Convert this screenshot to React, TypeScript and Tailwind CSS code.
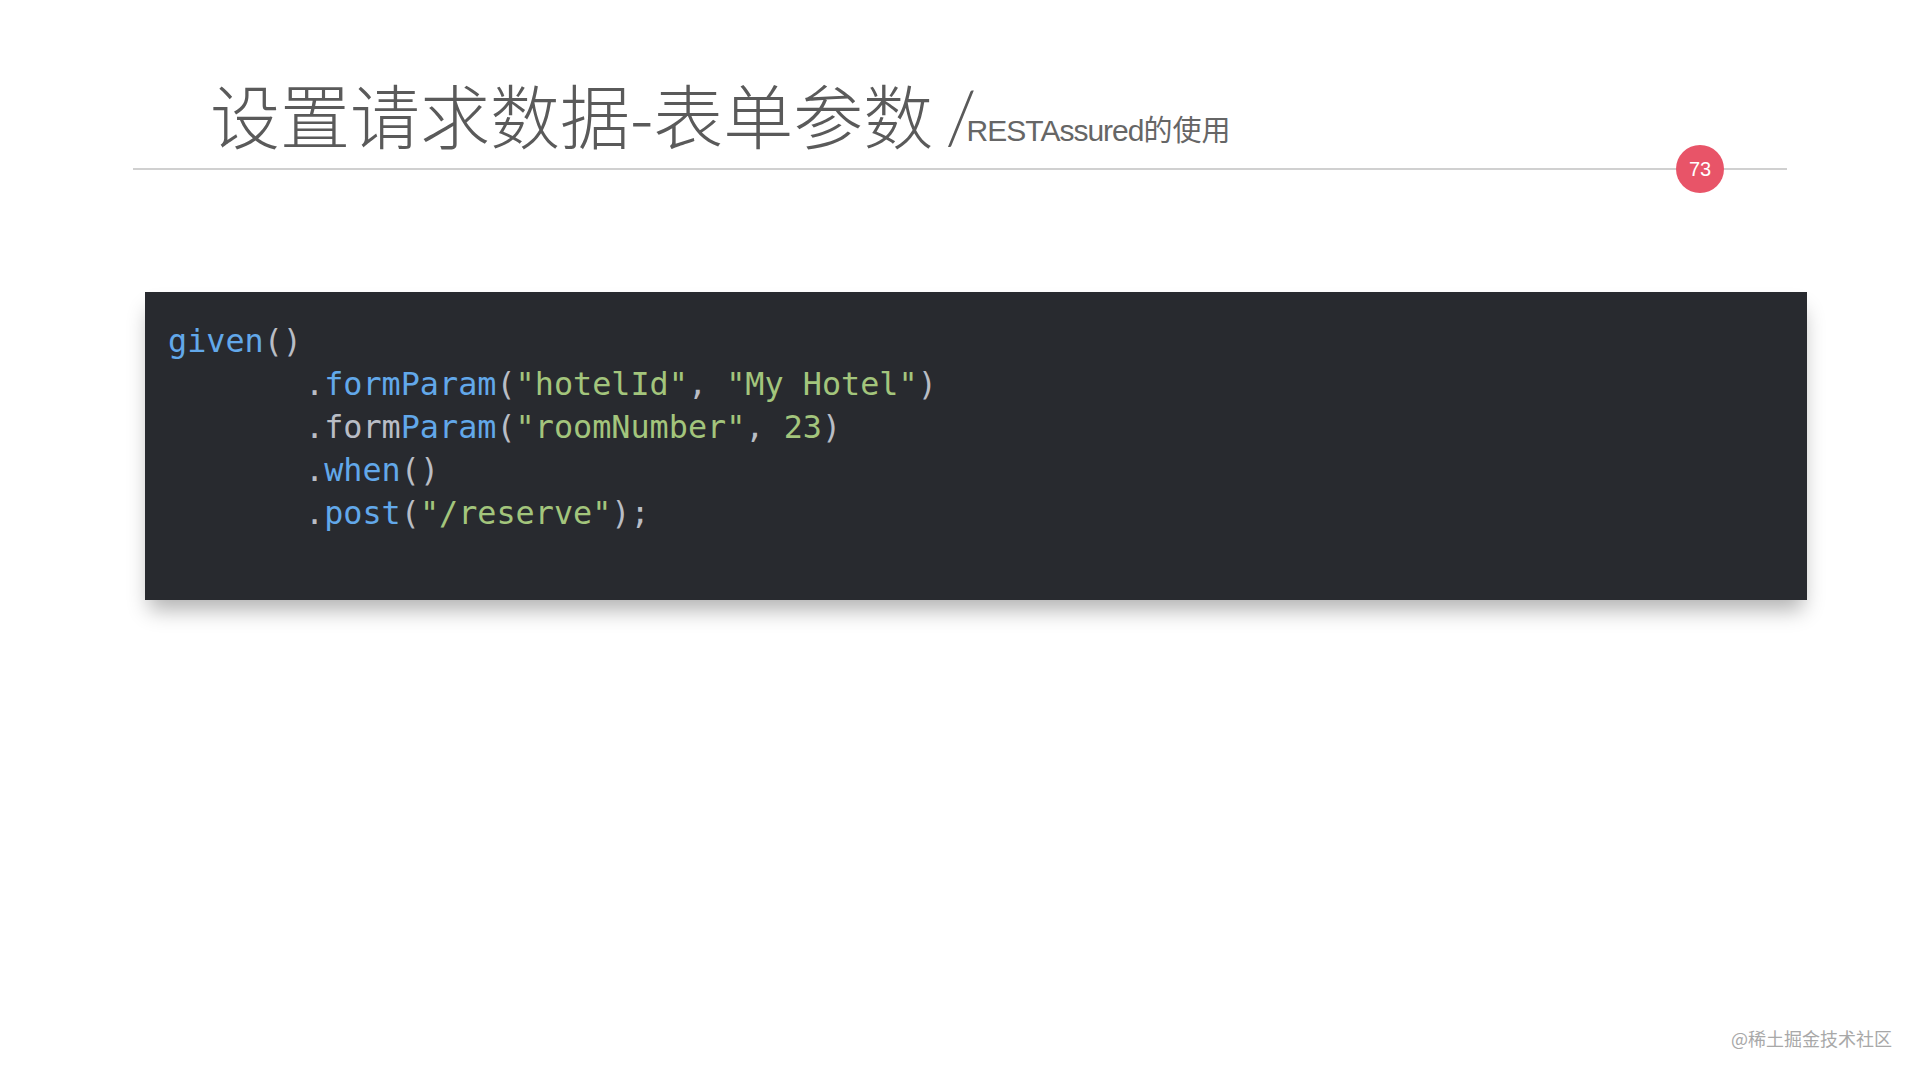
import React from "react";

const blue = "text-[#62a8ea]";
const green = "text-[#a3c57c]";
const gray = "text-[#b9bdc5]";

export default function App() {
  return (
    <div className="w-[1920px] h-[1080px] bg-white relative overflow-hidden">
      <div className="pt-[79px] pl-[210px] flex items-baseline h-[140px]" style={{ fontFamily: '"Noto Sans CJK SC", "Noto Sans", sans-serif' }}>
        <span className="text-[70px] leading-none font-light text-[#5a5a5a]">设置请求数据-表单参数</span>
        <span className="text-[72px] leading-none font-light text-[#5a5a5a] ml-[12px] mr-[-6px] tracking-[-4px]" style={{ fontFamily: 'Lato, "Liberation Sans", sans-serif' }}>/</span>
        <span className="relative top-[-3px] text-[30px] leading-none text-[#666666] tracking-[-1px]" style={{ fontFamily: '"Liberation Sans", "Noto Sans CJK SC", sans-serif' }}>RESTAssured</span>
        <span className="relative top-[-3px] text-[29px] leading-none text-[#666666]" style={{ fontFamily: '"Noto Sans CJK SC", sans-serif' }}>的使用</span>
      </div>
      <div className="relative mx-[133px] mt-[28px] h-[2px] bg-[#d0d0d0]">
        <div className="absolute left-[1543px] top-[-23px] w-[48px] h-[48px] rounded-full bg-[#e85468] flex items-center justify-center text-white text-[20px]" style={{ fontFamily: '"Liberation Sans", sans-serif' }}>
          73
        </div>
      </div>
      <div className="ml-[145px] mt-[122px] w-[1662px] h-[308px] bg-[#282a2f] shadow-[0_14px_20px_-4px_rgba(0,0,0,0.3)] pt-[27px] pl-[23px] text-[31.8px] leading-[43px]" style={{ fontFamily: '"DejaVu Sans Mono", "Liberation Mono", monospace' }}>
        <div className="whitespace-pre">
          <span className={blue}>given</span><span className={gray}>()</span>
        </div>
        <div className="whitespace-pre pl-[137px]">
          <span className={gray}>.</span><span className={blue}>formParam</span><span className={gray}>(</span><span className={green}>"hotelId"</span><span className={gray}>, </span><span className={green}>"My Hotel"</span><span className={gray}>)</span>
        </div>
        <div className="whitespace-pre pl-[137px]">
          <span className={gray}>.form</span><span className={blue}>Param</span><span className={gray}>(</span><span className={green}>"roomNumber"</span><span className={gray}>, </span><span className={green}>23</span><span className={gray}>)</span>
        </div>
        <div className="whitespace-pre pl-[137px]">
          <span className={gray}>.</span><span className={blue}>when</span><span className={gray}>()</span>
        </div>
        <div className="whitespace-pre pl-[137px]">
          <span className={gray}>.</span><span className={blue}>post</span><span className={gray}>(</span><span className={green}>"/reserve"</span><span className={gray}>);</span>
        </div>
      </div>
      <div className="absolute right-[28px] bottom-[28px] text-[18px] text-[#a8a8a8]" style={{ fontFamily: '"Noto Sans CJK SC", sans-serif' }}>
        @稀土掘金技术社区
      </div>
    </div>
  );
}
